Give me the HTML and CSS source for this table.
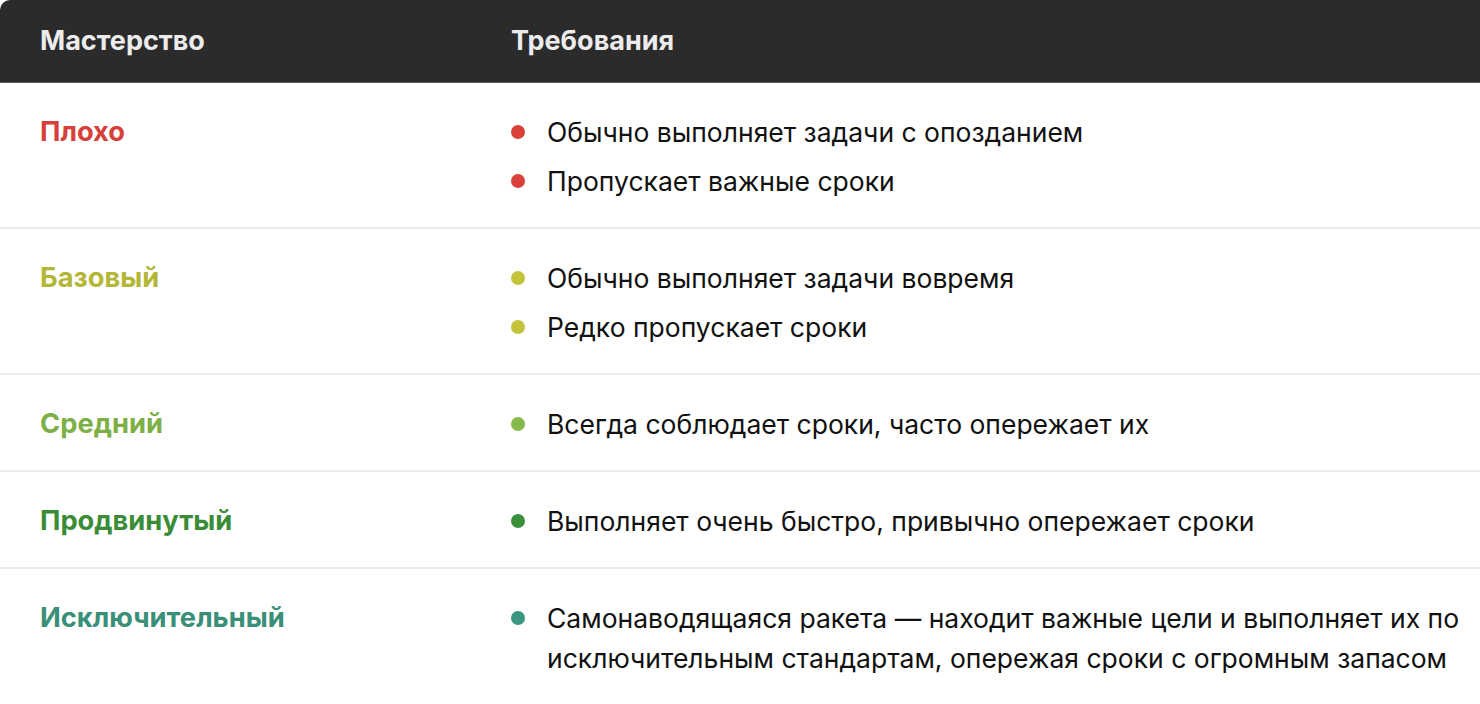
FILE: index.html
```html
<!DOCTYPE html>
<html lang="ru">
<head>
<meta charset="utf-8">
<link rel="stylesheet" href="styles.css">
</head>
<body>
<div class="table">
  <div class="row head">
    <div class="col-level">Мастерство</div>
    <div class="col-req">Требования</div>
  </div>
  <div class="row">
    <div class="col-level level poor">Плохо</div>
    <ul class="col-req reqs poor">
      <li>Обычно выполняет задачи с опозданием</li>
      <li>Пропускает важные сроки</li>
    </ul>
  </div>
  <div class="row">
    <div class="col-level level basic">Базовый</div>
    <ul class="col-req reqs basic">
      <li>Обычно выполняет задачи вовремя</li>
      <li>Редко пропускает сроки</li>
    </ul>
  </div>
  <div class="row">
    <div class="col-level level mid">Средний</div>
    <ul class="col-req reqs mid">
      <li>Всегда соблюдает сроки, часто опережает их</li>
    </ul>
  </div>
  <div class="row">
    <div class="col-level level adv">Продвинутый</div>
    <ul class="col-req reqs adv">
      <li>Выполняет очень быстро, привычно опережает сроки</li>
    </ul>
  </div>
  <div class="row">
    <div class="col-level level exc">Исключительный</div>
    <ul class="col-req reqs exc">
      <li>Самонаводящаяся ракета — находит важные цели и выполняет их по исключительным стандартам, опережая сроки с огромным запасом</li>
    </ul>
  </div>
</div>
</body>
</html>
```

FILE: styles.css
```css
html, body {
  margin: 0;
  padding: 0;
  background: #ffffff;
}
body {
  font-family: Inter, Roboto, "Noto Sans", "Liberation Sans", sans-serif;
  color: #111;
  overflow: hidden;
}
.table {
  width: 1480px;
}
.row {
  display: flex;
  border-bottom: 2px solid #ececec;
  padding: 29px 0 26px;
}
.row.head {
  background: #2b2b2b;
  color: #ececec;
  font-weight: 700;
  font-size: 27px;
  line-height: 30px;
  padding: 26px 0 26px;
  border-top-left-radius: 10px;
  border-bottom: 1px solid #5a5a5a;
}
.col-level {
  width: 471px;
  padding-left: 40px;
  flex: none;
}
.col-req {
  flex: 1;
  padding-right: 0;
}
.level {
  font-weight: 700;
  font-size: 27.3px;
  line-height: 40px;
}
.reqs {
  list-style: none;
  margin: 0;
  padding-left: 0;
  display: flex;
  flex-direction: column;
  gap: 9px;
}
.reqs li {
  position: relative;
  padding-left: 36px;
  font-size: 26.5px;
  line-height: 40px;
}
.reqs li::before {
  content: "";
  position: absolute;
  left: 0;
  top: 13px;
  width: 14px;
  height: 14px;
  border-radius: 50%;
  background: currentColor;
}
.reqs li { color: #111; }
.reqs.poor li::before { background: #d9413a; }
.reqs.basic li::before { background: #c4c43c; }
.reqs.mid li::before { background: #86b94c; }
.reqs.adv li::before { background: #3b8f3b; }
.reqs.exc li::before { background: #3b9681; }
.level.poor { color: #d6403a; }
.level.basic { color: #b4b736; }
.level.mid { color: #7cb046; }
.level.adv { color: #3a8d36; }
.level.exc { color: #3a8f78; }
```
